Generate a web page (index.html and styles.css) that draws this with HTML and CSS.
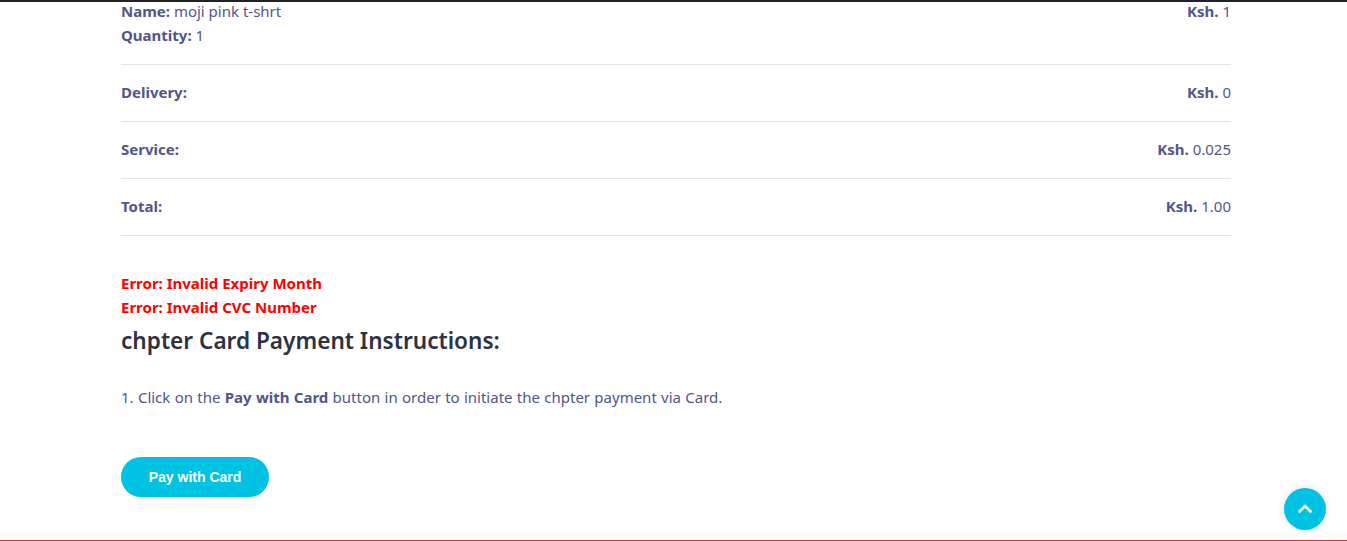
FILE: index.html
```html
<!DOCTYPE html>
<html lang="en">
<head>
<meta charset="utf-8">
<title>Checkout</title>
<link rel="stylesheet" href="styles.css">
</head>
<body>
<div class="topbar"></div>
<main class="page">
  <section class="summary">
    <div class="row">
      <div class="item">
        <div><b>Name:</b> moji pink t-shrt</div>
        <div><b>Quantity:</b> 1</div>
      </div>
      <div><b>Ksh.</b> 1</div>
    </div>
    <div class="row">
      <div><b>Delivery:</b></div>
      <div><b>Ksh.</b> 0</div>
    </div>
    <div class="row">
      <div><b>Service:</b></div>
      <div><b>Ksh.</b> 0.025</div>
    </div>
    <div class="row">
      <div><b>Total:</b></div>
      <div><b>Ksh.</b> 1.00</div>
    </div>
  </section>
  <section class="payment">
    <p class="error">Error: Invalid Expiry Month</p>
    <p class="error">Error: Invalid CVC Number</p>
    <h2 class="title">chpter Card Payment Instructions:</h2>
    <p class="instructions">1. Click on the <b>Pay with Card</b> button in order to initiate the chpter payment via Card.</p>
    <button class="pay-btn" type="button">Pay with Card</button>
  </section>
</main>
<div class="bottom-line"></div>
<a class="to-top" href="#" aria-label="Back to top">
  <svg width="18" height="18" viewBox="0 0 18 18"><path d="M3.5 11.5 L9 6 L14.5 11.5" fill="none" stroke="#fff" stroke-width="2.6" stroke-linecap="round" stroke-linejoin="round"/></svg>
</a>
</body>
</html>
```

FILE: styles.css
```css
html, body {
  margin: 0;
  padding: 0;
  background: #fff;
  height: 541px;
  overflow: hidden;
}
body {
  font-family: "Noto Sans", "Lato", sans-serif;
  font-size: 15px;
  color: #515689;
}
.topbar {
  position: fixed;
  top: 0;
  left: 0;
  right: 0;
  height: 2px;
  background: #1f2326;
  z-index: 5;
}
.page {
  width: 1110px;
  margin-left: 121px;
}
.summary {
  display: flex;
  flex-direction: column;
}
.row {
  display: flex;
  justify-content: space-between;
  align-items: flex-start;
  line-height: 24px;
  padding: 15px 0 17px;
  border-bottom: 1px solid #e4e4e4;
}
.row:first-child {
  padding-top: 0;
  margin-top: -1px;
}
.row b {
  font-weight: 700;
}
.payment {
  padding-top: 35px;
}
.error {
  margin: 0;
  color: #ff0000;
  font-weight: 700;
  font-size: 15px;
  line-height: 24px;
}
.title {
  margin: 8px 0 0;
  font-size: 22.6px;
  line-height: 28px;
  font-weight: 600;
  color: #2d3142;
}
.instructions {
  margin: 30px 0 0;
  font-size: 15px;
  word-spacing: 0.4px;
  line-height: 24px;
}
.pay-btn {
  margin-top: 48px;
  width: 148px;
  height: 40px;
  border: none;
  border-radius: 20px;
  background: #00c3e3;
  color: #fff;
  font-family: "Liberation Sans", Arial, sans-serif;
  font-weight: 700;
  font-size: 14px;
  cursor: pointer;
}
.bottom-line {
  position: fixed;
  left: 0;
  right: 0;
  bottom: 0;
  height: 1px;
  background: #d03a3a;
}
.to-top {
  position: fixed;
  left: 1284px;
  top: 488px;
  width: 42px;
  height: 42px;
  border-radius: 50%;
  background: #00c3e3;
  box-shadow: 0 0 8px rgba(0,0,0,0.12);
  display: flex;
  align-items: center;
  justify-content: center;
}
```
